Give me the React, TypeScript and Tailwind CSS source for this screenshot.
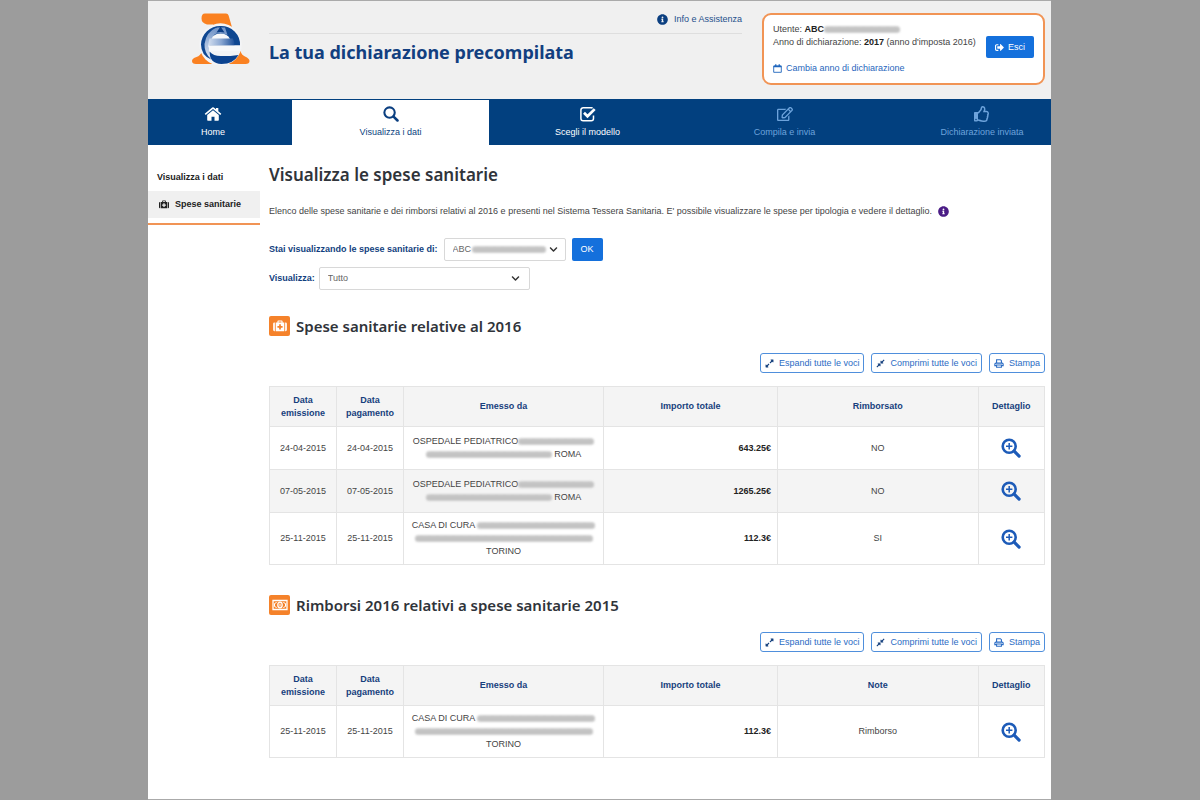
import React, { useState } from "react";
import {
  FaChevronDown,
  FaCompressAlt,
  FaExpandAlt,
  FaInfoCircle,
  FaRegEdit,
  FaRegThumbsUp,
  FaSignOutAlt,
} from "react-icons/fa";

interface Expense {
  issued: string;
  paid: string;
  issuer: "ospedale" | "casa";
  amount: string;
  status: string;
}

interface ExpenseSectionProps {
  title: string;
  icon: React.ReactNode;
  statusLabel: string;
  rows: Expense[];
}

const expenses: Expense[] = [
  { issued: "24-04-2015", paid: "24-04-2015", issuer: "ospedale", amount: "643.25€", status: "NO" },
  { issued: "07-05-2015", paid: "07-05-2015", issuer: "ospedale", amount: "1265.25€", status: "NO" },
  { issued: "25-11-2015", paid: "25-11-2015", issuer: "casa", amount: "112.3€", status: "SI" },
];

const refunds: Expense[] = [
  { issued: "25-11-2015", paid: "25-11-2015", issuer: "casa", amount: "112.3€", status: "Rimborso" },
];

// Hidden personal data
const Redacted = ({ className }: { className: string }) => (
  <span
    aria-hidden="true"
    className={`inline-block h-[7px] rounded-full bg-[linear-gradient(to_bottom,#dedede,#b8b8b8_30%,#cdcdcd_50%,#b4b4b4_75%,#e2e2e2)] align-middle blur-[1px] ${className}`}
  />
);

const Logo = () => (
  <svg viewBox="0 0 60 52" className="h-[52px] w-[60px]" role="img" aria-label="Agenzia delle Entrate">
    <defs>
      <linearGradient id="logo-bar" x1="0" x2="1" y1="0" y2="0">
        <stop offset="0" stopColor="#d3deef" />
        <stop offset="0.5" stopColor="#89a6d2" />
        <stop offset="1" stopColor="#1c4f99" />
      </linearGradient>
      <linearGradient id="logo-stem" x1="0" x2="0" y1="0" y2="1">
        <stop offset="0" stopColor="#6f92c6" />
        <stop offset="1" stopColor="#dde6f3" />
      </linearGradient>
    </defs>
    <path d="M14 .5h21q2 0 2.600 2L41.500 16H22v-4.500h-6Q10.500 10 10.500 5.500q0-5 3.500-5Z" fill="#fa8121" />
    <path d="M10.500 39q-1 3.500-5 5-4.500 1.500-4.500 4 0 3 4 3h17ZM43 38h6.500q1 4 4.500 5.500 4.500 2 4.500 4.500 0 3-4 3H34Z" fill="#fa8121" />
    <circle cx="29.500" cy="31.500" r="21.200" fill="#f3f4f6" />
    <path d="M29.500 13a18.500 18.500 0 0 1 19.500 19.500H17.500A18.500 18.500 0 0 0 20 46.500Q10 42 10 31.500A19 19 0 0 1 29.500 13Z" fill="#0f4791" />
    <path d="M25.500 14.500Q15 19 13.500 31q-.5 9 6.500 15 -4-8-1-14l4-10q3-3 7-3l-5-4.500Z" fill="url(#logo-stem)" />
    <path d="M26 14.500 23.500 21q6-2.500 13 1L34 14.500Z" fill="#7898ca" />
    <path d="m29.500 13.500-4 6q4-1 8 0Z" fill="#0b3d84" />
    <path d="M20.500 26q2-5.500 9-5.500T39 26Z" fill="#f7f8fa" />
    <path d="M18.500 25.500H42q1.500 3 1.500 7H17Z" fill="url(#logo-bar)" />
    <path d="M17 32.500h32v5.500H19Z" fill="#f7f8fa" />
    <path d="M18.500 38.500q4 4.500 11 4.500h10l8-1q-5 9-17 9-12-.5-12-12.500Z" fill="#0c4390" />
  </svg>
);

const HomeIcon = ({ className }: { className: string }) => (
  <svg viewBox="0 0 18 16" fill="currentColor" className={className} aria-hidden="true">
    <path d="M9 4.300 14.800 9v5a.7.7 0 0 1-.7.700H10.500v-4h-3v4H3.900a.7.700 0 0 1-.7-.7V9Z" />
    <path d="M8.200 1.500a1.300 1.300 0 0 1 1.600 0L12 3.300V2h2.300v3.300l3 2.500-1 1.200L9 3 1.700 9l-1-1.200Z" />
  </svg>
);

const MedkitIcon = ({ className }: { className: string }) => (
  <svg viewBox="0 0 16 14" fill="currentColor" className={className} aria-hidden="true">
    <path
      fillRule="evenodd"
      d="M0 4.500A1.500 1.500 0 0 1 1.500 3H2v10h-.5A1.500 1.500 0 0 1 0 11.500ZM14 3h.5A1.500 1.500 0 0 1 16 4.500v7a1.500 1.500 0 0 1-1.500 1.500H14ZM3 3h2V1.500A1 1 0 0 1 6 .5h4a1 1 0 0 1 1 1V3h2v10H3Zm3.300 0h3.400V1.700H6.300ZM7 5v2H5v2h2v2h2V9h2V7H9V5Z"
    />
  </svg>
);

const PrintIcon = () => (
  <svg viewBox="0 0 14 13" fill="none" stroke="currentColor" className="h-[9px] w-2.5" aria-hidden="true">
    <path d="M3.500 6V1h5.500l1.500 1.500V6M3.500 9.500H1V7.500Q1 6 2.500 6h9Q13 6 13 7.500v2h-2.500" strokeWidth="1.600" />
    <path d="M3.500 8.700h7V12h-7Z" strokeWidth="1.500" />
  </svg>
);

const CalendarIcon = () => (
  <svg viewBox="0 0 13 13" fill="none" stroke="currentColor" className="size-[9px]" aria-hidden="true">
    <path d="M1 3h11v9H1Z" strokeWidth="1.300" strokeLinejoin="round" />
    <path d="M1 3.500h11" strokeWidth="2.400" />
    <path d="M4 .5v3M9 .5v3" strokeWidth="1.800" />
  </svg>
);

const SearchIcon = ({ plus, className }: { plus?: boolean; className: string }) => (
  <svg viewBox="0 0 20 20" fill="none" stroke="currentColor" className={className} aria-hidden="true">
    <circle cx="8.200" cy="8.200" r="6.500" strokeWidth="2.600" />
    <path d="m13.200 13.200 4.900 4.900" strokeWidth="3.200" strokeLinecap="round" />
    {plus && <path d="M8.200 5v6.400M5 8.200h6.400" strokeWidth="1.500" />}
  </svg>
);

const CheckSquareIcon = ({ className }: { className: string }) => (
  <svg viewBox="0 0 18 16" fill="none" stroke="currentColor" className={className} aria-hidden="true">
    <path d="M14.500 9.500v3a2.300 2.300 0 0 1-2.300 2.300h-8a2.300 2.300 0 0 1-2.300-2.300V4a2.300 2.300 0 0 1 2.300-2.300h8q.9 0 1.400.3" strokeWidth="1.500" />
    <path d="m5 6.800 3.500 3.500 7.200-7.200" strokeWidth="2.700" />
  </svg>
);

const MoneyIcon = () => (
  <svg viewBox="0 0 16 12" fill="none" stroke="currentColor" className="h-3 w-4" aria-hidden="true">
    <path d="M1 1.500h14v9H1Z" strokeWidth="1.300" />
    <ellipse cx="8" cy="6" rx="2.200" ry="2.800" strokeWidth="1.300" />
    <path d="M4.500 3Q4 4.500 2.500 4.500v3Q4 7.500 4.500 9M11.500 3q.5 1.500 2 1.500v3q-1.500 0-2 1.500M8 4.500v3" strokeWidth="1" />
  </svg>
);

const Issuer = ({ kind }: { kind: Expense["issuer"] }) =>
  kind === "ospedale" ? (
    <>
      <div className="whitespace-nowrap">OSPEDALE PEDIATRICO<Redacted className="w-[76px]" /></div>
      <div className="whitespace-nowrap"><Redacted className="w-[126px]" /> ROMA</div>
    </>
  ) : (
    <>
      <div className="whitespace-nowrap">CASA DI CURA <Redacted className="w-[118px]" /></div>
      <div><Redacted className="w-[178px]" /></div>
      <div>TORINO</div>
    </>
  );

const ActionButton = ({ icon, children }: { icon: React.ReactNode; children: React.ReactNode }) => (
  <button
    type="button"
    className="flex h-5 items-center gap-[5px] whitespace-nowrap rounded-[3px] border border-[#4f8fdc] bg-white px-1 text-[9px] text-[#2b6cc4]">
    {icon}
    {children}
  </button>
);

const ExpenseSection: React.FC<ExpenseSectionProps> = ({ title, icon, statusLabel, rows }) => (
  <section className="mb-[29px]">
    <h2 className="flex h-[22px] items-center gap-1.5 font-['Noto_Sans',sans-serif] text-[15px] font-semibold text-[#30343a]">
      <span className="flex h-5 w-[21px] items-center justify-center rounded-[2px] bg-[#f5822a] text-white">{icon}</span>
      {title}
    </h2>
    <div className="mt-4 flex justify-end gap-[7px]">
      <ActionButton icon={<FaExpandAlt className="size-[9px] text-[#123e7c]" />}>Espandi tutte le voci</ActionButton>
      <ActionButton icon={<FaCompressAlt className="size-[9px] text-[#123e7c]" />}>Comprimi tutte le voci</ActionButton>
      <ActionButton icon={<PrintIcon />}>Stampa</ActionButton>
    </div>
    <table className="mt-[13px] w-full table-fixed border-collapse text-center text-[9px] leading-[13px] [&_td]:border [&_td]:border-[#e4e4e4] [&_th]:border [&_th]:border-[#e4e4e4]">
      <colgroup>
        <col className="w-[8.65%]" />
        <col className="w-[8.65%]" />
        <col className="w-[25.8%]" />
        <col className="w-[22.45%]" />
        <col className="w-[25.9%]" />
        <col />
      </colgroup>
      <thead className="bg-[#f4f4f4] text-[#173f7d]">
        <tr className="h-10">
          <th scope="col">Data<br />emissione</th>
          <th scope="col">Data<br />pagamento</th>
          <th scope="col">Emesso da</th>
          <th scope="col">Importo totale</th>
          <th scope="col">{statusLabel}</th>
          <th scope="col">Dettaglio</th>
        </tr>
      </thead>
      <tbody>
        {rows.map((row) => (
          <tr key={row.issued} className="h-[43px] even:bg-[#f4f4f4]">
            <td>{row.issued}</td>
            <td>{row.paid}</td>
            <td className="py-1.5"><Issuer kind={row.issuer} /></td>
            <td className="pr-1.5 text-right font-bold text-[#222]">{row.amount}</td>
            <td>{row.status}</td>
            <td>
              <button type="button" aria-label={`Dettaglio ${row.issued}`} className="align-middle text-[#1d5bb8]">
                <SearchIcon plus className="size-5" />
              </button>
            </td>
          </tr>
        ))}
      </tbody>
    </table>
  </section>
);

const steps = [
  { label: "Home", icon: <HomeIcon className="h-4 w-[18px]" />, className: "pr-3.5 text-white" },
  { label: "Visualizza i dati", icon: <SearchIcon className="size-4" />, className: "bg-white text-[#0b3f80]" },
  { label: "Scegli il modello", icon: <CheckSquareIcon className="h-4 w-[18px]" />, className: "text-white" },
  { label: "Compila e invia", icon: <FaRegEdit className="size-4" />, className: "text-[#6da3dc]" },
  { label: "Dichiarazione inviata", icon: <FaRegThumbsUp className="size-4" />, className: "pl-[30px] text-[#6da3dc]" },
];

const App: React.FC = () => {
  const [filter, setFilter] = useState("Tutto");

  return (
    <div className="min-h-screen bg-[#9c9c9c] pl-[148px] pr-[149px] font-['Liberation_Sans',Arial,sans-serif] text-[9px] leading-[13px] text-[#444]">
      <div className="min-h-screen border-y border-[#aaa] bg-white">
        <header className="flex h-[98px] bg-[#f0f0f0] pr-1.5">
          <div className="w-[121px] shrink-0 pl-[43px] pt-3">
            <Logo />
          </div>
          <div className="w-[473px] pt-3">
            <div className="flex justify-end border-b border-[#dedede] pb-[7px]">
              <a href="#info" className="flex items-center gap-1.5 text-[#244f8b]">
                <FaInfoCircle className="size-[11px] text-[#0b3f80]" />
                Info e Assistenza
              </a>
            </div>
            <div className="mt-1.5 whitespace-nowrap font-['Noto_Sans',sans-serif] text-[18px] font-bold leading-6 text-[#123f80]">
              La tua dichiarazione precompilata
            </div>
          </div>
          <div className="ml-auto mt-3 flex h-[72px] w-[283px] items-center justify-between rounded-[9px] border-2 border-[#f19455] bg-white px-[9px]">
            <div className="whitespace-nowrap">
              <p>Utente: <strong className="text-[#222]">ABC</strong><Redacted className="w-[76px]" /></p>
              <p>Anno di dichiarazione: <strong className="text-[#222]">2017</strong> (anno d'imposta 2016)</p>
              <a href="#anno" className="mt-[13px] flex items-center gap-1 text-[#1f66bd]">
                <CalendarIcon />
                Cambia anno di dichiarazione
              </a>
            </div>
            <button type="button" className="mb-1 flex h-[22px] w-12 items-center justify-center gap-1 rounded-[2px] bg-[#1470dc] text-white">
              <FaSignOutAlt className="size-[9px]" />
              Esci
            </button>
          </div>
        </header>

        <nav className="grid h-[46px] grid-cols-[144fr_197fr_197fr_197fr_168fr] bg-[#02407f] pt-px">
          {steps.map((step) => (
            <a key={step.label} href="#step" className={`flex flex-col items-center gap-1 pt-1.5 ${step.className}`}>
              {step.icon}
              <span>{step.label}</span>
            </a>
          ))}
        </nav>

        <div className="flex pr-1.5">
          <aside className="mr-[9px] w-28 shrink-0 pt-[26px] font-bold text-[#222]">
            <p className="pl-[9px]">Visualizza i dati</p>
            <a href="#spese" className="mt-[7px] flex h-[27px] items-center gap-1.5 bg-[#f0f0f0] pl-[11px]">
              <MedkitIcon className="h-[9px] w-2.5" />
              Spese sanitarie
            </a>
            <hr className="mt-[5px] border-t-2 border-[#f19455]" />
          </aside>

          <main className="min-w-0 flex-1 pt-[18px]">
            <h1 className="font-['Noto_Sans',sans-serif] text-[17px] font-semibold leading-6 text-[#30343a]">Visualizza le spese sanitarie</h1>
            <p className="mt-[18px] flex items-center gap-1.5 whitespace-nowrap">
              Elenco delle spese sanitarie e dei rimborsi relativi al 2016 e presenti nel Sistema Tessera Sanitaria. E' possibile visualizzare le spese per tipologia e vedere il dettaglio.
              <FaInfoCircle className="size-[11px] text-[#4b1d86]" />
            </p>

            <form className="mt-5">
              <div className="flex items-center gap-1.5">
                <label htmlFor="person" className="font-bold text-[#123f80]">Stai visualizzando le spese sanitarie di:</label>
                <div className="relative">
                  <select id="person" className="h-[23px] w-[122px] appearance-none rounded-[2px] border border-[#d8d8d8] bg-white pl-2 text-[9px] text-[#666]">
                    <option>ABC</option>
                  </select>
                  <Redacted className="pointer-events-none absolute left-7 top-2 w-[74px]" />
                  <FaChevronDown className="pointer-events-none absolute right-2 top-[7px] size-[9px] text-[#333]" />
                </div>
                <button type="button" className="h-[23px] w-[31px] rounded-[2px] bg-[#1470dc] text-white">OK</button>
              </div>
              <div className="mt-1.5 flex items-center gap-1">
                <label htmlFor="filter" className="font-bold text-[#123f80]">Visualizza:</label>
                <div className="relative">
                  <select
                    id="filter"
                    value={filter}
                    onChange={(e) => setFilter(e.target.value)}
                    className="h-[23px] w-[211px] appearance-none rounded-[2px] border border-[#d8d8d8] bg-white pl-2 text-[9px] text-[#666]">
                    <option>Tutto</option>
                  </select>
                  <FaChevronDown className="pointer-events-none absolute right-2.5 top-[7px] size-[9px] text-[#333]" />
                </div>
              </div>
            </form>

            <div className="mt-[25px]">
              <ExpenseSection title="Spese sanitarie relative al 2016" icon={<MedkitIcon className="h-3 w-3.5" />} statusLabel="Rimborsato" rows={expenses} />
              <ExpenseSection title="Rimborsi 2016 relativi a spese sanitarie 2015" icon={<MoneyIcon />} statusLabel="Note" rows={refunds} />
            </div>
          </main>
        </div>
      </div>
    </div>
  );
};

export default App;
